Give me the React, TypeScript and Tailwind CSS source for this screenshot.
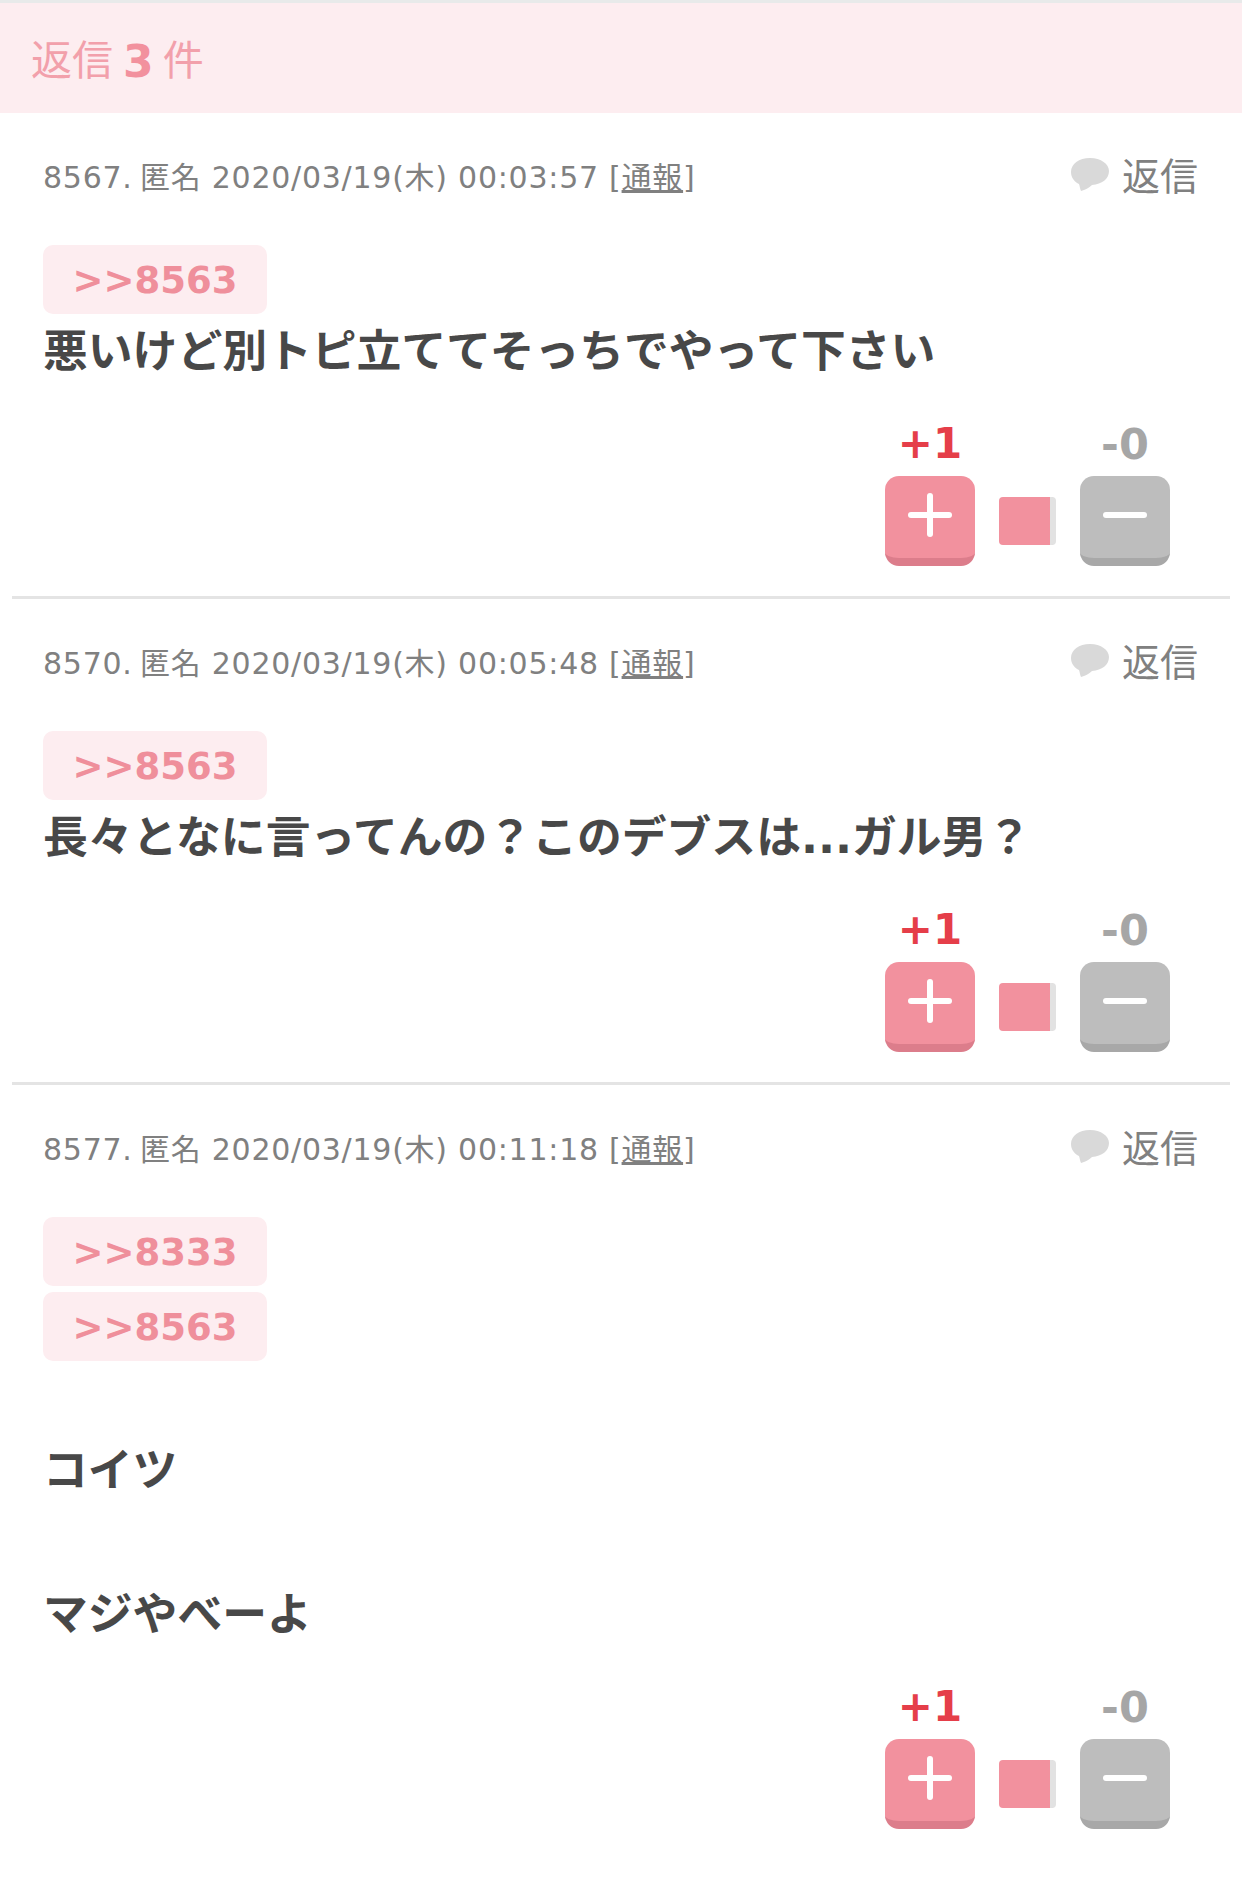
import { Fragment } from 'react'

const sans = '"DejaVu Sans", "Noto Sans CJK JP", sans-serif'

interface Reply {
  no: number
  date: string
  anchors: number[]
  lines: string[]
}

const replies: Reply[] = [
  { no: 8567, date: '2020/03/19(木) 00:03:57', anchors: [8563], lines: ['悪いけど別トピ立ててそっちでやって下さい'] },
  { no: 8570, date: '2020/03/19(木) 00:05:48', anchors: [8563], lines: ['長々となに言ってんの？このデブスは...ガル男？'] },
  { no: 8577, date: '2020/03/19(木) 00:11:18', anchors: [8333, 8563], lines: ['', 'コイツ', '', 'マジやべーよ'] },
]

function VoteButton({ type }: { type: 'plus' | 'minus' }) {
  const plus = type === 'plus'
  return (
    <div className={`relative w-[90px] h-[90px] rounded-[14px] ${plus ? 'bg-[#f2919e] border-b-[8px] border-[#dc7d8b]' : 'bg-[#bdbdbd] border-b-[8px] border-[#a8a8a8]'}`}>
      <span className="absolute left-[23px] top-[36px] w-[44px] h-[6px] rounded-full bg-white" />
      {plus && <span className="absolute left-[42px] top-[17px] w-[6px] h-[44px] rounded-full bg-white" />}
    </div>
  )
}

function Item({ reply }: { reply: Reply }) {
  return (
    <div className="mx-[12px] px-[31px] pt-[42px]">
      <div className="flex items-center justify-between h-[44px] pr-[1px]">
        <p className="text-[30px] leading-[44px] tracking-[0.75px] text-[#808080] whitespace-nowrap mt-[1px]">
          <span className="mr-[-3px]">{reply.no}.</span> 匿名 {reply.date} [<span className="underline">通報</span>]
        </p>
        <div className="flex items-center gap-[12px] text-[#808080]">
          <svg width="40" height="36" viewBox="0 0 40 36" className="mb-[5px]">
            <path d="M20 1C9 1 1 7 1 15c0 6 4 10 8 12 1 3 1 5 2 7 4-1 8-3 11-6C32 27 39 22 39 14 39 7 31 1 20 1z" fill="#d9d9d9" />
          </svg>
          <span className="text-[38px] leading-[44px]">返信</span>
        </div>
      </div>
      <div className="mt-[46px] flex flex-col gap-[6px] items-start">
        {reply.anchors.map((a) => (
          <span key={a} className="flex items-center justify-center w-[224px] h-[69px] pt-[2px] rounded-[10px] bg-[#fdedf0] text-[#ef8f9b] text-[37px] font-bold">
            &gt;&gt;{a}
          </span>
        ))}
      </div>
      <div className="mt-[2px] text-[44.8px] leading-[72px] font-bold text-[#484848]">
        {reply.lines.map((line, i) => (
          <Fragment key={i}>
            {line ? <p>{line}</p> : <p className="h-[72px]" />}
          </Fragment>
        ))}
      </div>
      <div className="mt-[34px] flex justify-end pr-[29px] pb-[30px]">
        <div className="flex items-end gap-[24px]">
          <div className="flex flex-col items-center">
            <span className="text-[42px] leading-[44px] mb-[10px] font-black text-[#e53e49]">+1</span>
            <VoteButton type="plus" />
          </div>
          <div className="w-[57px] h-[48px] mb-[21px] rounded-[4px] bg-[#f2919e] border-r-[6px] border-[#e2e2e2]" />
          <div className="flex flex-col items-center">
            <span className="text-[43px] leading-[44px] mb-[10px] font-black text-[#a6a6a6]">-0</span>
            <VoteButton type="minus" />
          </div>
        </div>
      </div>
    </div>
  )
}

export default function App() {
  return (
    <div className="w-[1242px] h-[1888px] bg-white overflow-hidden" style={{ fontFamily: sans }}>
      <div className="h-[113px] border-t-[3px] border-[#e8eaea] bg-[#fdedf0] flex items-center pt-[8px] px-[31px] text-[41px] text-[#f2a0ab]">
        返信 <b className="ml-[10px] mr-[9px] text-[44px] leading-none text-[#f2919e]">3</b> 件
      </div>
      {replies.map((r, i) => (
        <Fragment key={r.no}>
          {i > 0 && <div className="mx-[12px] h-[3px] bg-[#e4e4e4]" />}
          <Item reply={r} />
        </Fragment>
      ))}
    </div>
  )
}
